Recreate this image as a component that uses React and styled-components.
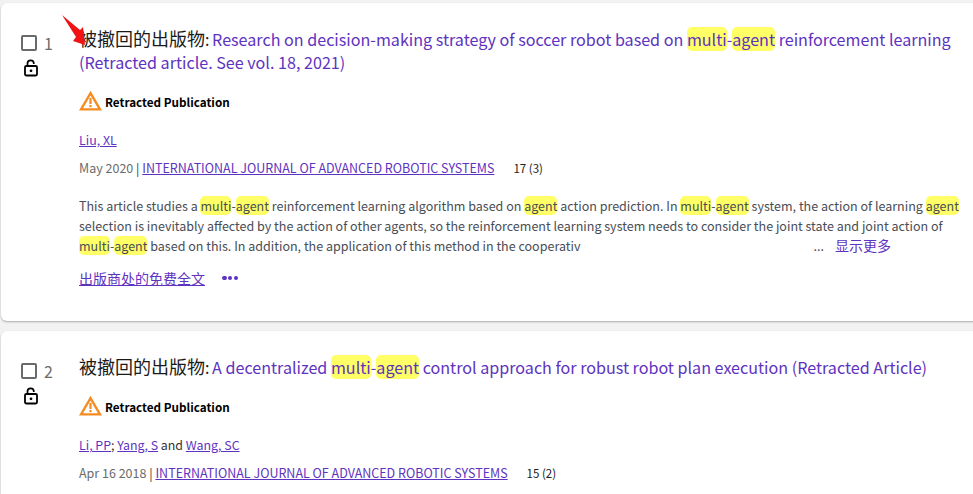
import React from 'react'
import styled, { createGlobalStyle } from 'styled-components'

const Global = createGlobalStyle`
  html, body {
    margin: 0;
    height: 100%;
    overflow: hidden;
    background: #f2f2f2;
    font-family: "Noto Sans CJK SC", "Noto Sans", sans-serif;
  }
`

const Page = styled.div`
  position: relative;
  width: 973px;
  height: 494px;
  overflow: hidden;
  padding: 3px 0 0 1px;
  box-sizing: border-box;
`

const Card = styled.article`
  display: flex;
  box-sizing: border-box;
  width: 990px;
  height: ${(props) => props.height}px;
  margin-bottom: 10px;
  padding-top: 24px;
  background: #fff;
  border-radius: 6px;
  box-shadow: 0 1px 2px rgba(0, 0, 0, 0.3);
`

const Side = styled.div`
  display: flex;
  flex-direction: column;
  width: 78px;
  padding: 6px 0 0 20px;
  box-sizing: border-box;
  flex-shrink: 0;
`

const CheckRow = styled.div`
  display: flex;
  align-items: center;
  height: 20px;
  gap: 7px;
`

const Box = styled.span`
  width: 12px;
  height: 12px;
  border: 2px solid #6a6a6a;
  border-radius: 2px;
`

const Num = styled.span`
  font-size: 16px;
  color: #6b6b6b;
`

const LockWrap = styled.div`
  margin: 5px 0 0 2px;
  height: 18px;
`

const Body = styled.div`
  width: 884px;
  flex-shrink: 0;
`

const Title = styled.h3`
  margin: 0;
  font-size: 16.12px;
  font-weight: 400;
  line-height: 23px;
  color: #5e33bf;
  white-space: nowrap;
`

const Prefix = styled.span`
  font-size: 18px;
  color: #1a1a1a;
`

const Colon = styled.span`
  color: #1a1a1a;
  letter-spacing: -0.5px;
`

const Mark = styled.mark`
  background: #ffff66;
  color: inherit;
  border-radius: 5px;
`

const Badge = styled.div`
  display: flex;
  align-items: center;
  gap: 3px;
  margin-top: 15px;
  height: 24px;
  font-size: 11.7px;
  font-weight: 700;
  color: #000;
`

const Authors = styled.div`
  margin-top: 18px;
  font-size: 12.4px;
  line-height: 18px;
  color: #333;
`

const Link = styled.a`
  color: #5e33bf;
  text-decoration: underline;
`

const Meta = styled.div`
  margin-top: 10px;
  font-size: 12.5px;
  line-height: 18px;
  color: #6b6b6b;
  white-space: pre;
`

const Pipe = styled.span`
  color: #333;
`

const Count = styled.span`
  margin-left: 19px;
  font-size: 11.5px;
  color: #222;
`

const Abstract = styled.div`
  margin-top: 19px;
  font-size: 12.53px;
  line-height: 20px;
  color: #494d55;
  white-space: nowrap;
`

const LastLine = styled.div`
  display: flex;
  white-space: pre;
`

const Ellipsis = styled.span`
  margin-left: 233px;
`

const More = styled.a`
  margin: -1px 0 0 11px;
  font-size: 14px;
  color: #5e33bf;
`

const Actions = styled.div`
  display: flex;
  align-items: center;
  margin-top: 11px;
  font-size: 14px;
  line-height: 22px;
`

const Dots = styled.span`
  display: flex;
  gap: 1.2px;
  margin-left: 17px;
`

const Dot = styled.i`
  width: 4.6px;
  height: 4.6px;
  border-radius: 50%;
  background: #5e33bf;
`

const Arrow = styled.svg`
  position: absolute;
  left: 55px;
  top: 10px;
`

const Lock = () => (
  <svg width="16" height="18" viewBox="0 0 16 18" fill="none">
    <path d="M4.5 7V4.6C4.5 2.7 5.9 1.3 7.7 1.3C9.6 1.3 10.8 2.7 10.8 4.6V5" stroke="#000" strokeWidth="1.7" />
    <rect x="2" y="7" width="12" height="9.5" rx="1.2" stroke="#000" strokeWidth="1.8" />
    <circle cx="8" cy="11.8" r="1.4" fill="#000" />
  </svg>
)

const Warning = () => (
  <svg width="23" height="20" viewBox="0 0 23 20" fill="none">
    <path d="M11.5 2.2L21 18.4H2Z" stroke="#f68b1f" strokeWidth="2.4" strokeLinejoin="miter" />
    <rect x="10.4" y="7" width="2.2" height="6" fill="#f68b1f" />
    <rect x="10.4" y="14" width="2.2" height="2.2" fill="#f68b1f" />
  </svg>
)

const Retracted = () => (
  <Badge>
    <Warning />
    Retracted Publication
  </Badge>
)

const RecordSide = ({ n }) => (
  <Side>
    <CheckRow>
      <Box />
      <Num>{n}</Num>
    </CheckRow>
    <LockWrap>
      <Lock />
    </LockWrap>
  </Side>
)

export default function App() {
  return (
    <Page>
      <Global />
      <Card height={318}>
        <RecordSide n={1} />
        <Body>
          <Title>
            <Prefix>被撤回的出版物</Prefix>
            <Colon>: </Colon>
            Research on decision-making strategy of soccer robot based on <Mark>multi</Mark>-<Mark>agent</Mark> reinforcement learning
            <br />
            (Retracted article. See vol. 18, 2021)
          </Title>
          <Retracted />
          <Authors>
            <Link>Liu, XL</Link>
          </Authors>
          <Meta>
            May 2020 <Pipe>|</Pipe> <Link>INTERNATIONAL JOURNAL OF ADVANCED ROBOTIC SYSTEMS</Link>
            <Count>17 (3)</Count>
          </Meta>
          <Abstract>
            This article studies a <Mark>multi</Mark>-<Mark>agent</Mark> reinforcement learning algorithm based on <Mark>agent</Mark> action prediction. In <Mark>multi</Mark>-<Mark>agent</Mark> system, the action of learning <Mark>agent</Mark>
            <br />
            selection is inevitably affected by the action of other agents, so the reinforcement learning system needs to consider the joint state and joint action of
            <LastLine>
              <span><Mark>multi</Mark>-<Mark>agent</Mark> based on this. In addition, the application of this method in the cooperativ</span>
              <Ellipsis>...</Ellipsis>
              <More>显示更多</More>
            </LastLine>
          </Abstract>
          <Actions>
            <Link>出版商处的免费全文</Link>
            <Dots>
              <Dot />
              <Dot />
              <Dot />
            </Dots>
          </Actions>
        </Body>
      </Card>
      <Card height={200}>
        <RecordSide n={2} />
        <Body>
          <Title>
            <Prefix>被撤回的出版物</Prefix>
            <Colon>: </Colon>
            A decentralized <Mark>multi</Mark>-<Mark>agent</Mark> control approach for robust robot plan execution (Retracted Article)
          </Title>
          <Retracted />
          <Authors>
            <Link>Li, PP</Link>; <Link>Yang, S</Link> and <Link>Wang, SC</Link>
          </Authors>
          <Meta>
            Apr 16 2018 <Pipe>|</Pipe> <Link>INTERNATIONAL JOURNAL OF ADVANCED ROBOTIC SYSTEMS</Link>
            <Count>15 (2)</Count>
          </Meta>
        </Body>
      </Card>
      <Arrow width="40" height="42" viewBox="0 0 40 42">
        <path d="M7 5L25 20L28 17L30 35L18 31L21 27Z" fill="#f01414" />
      </Arrow>
    </Page>
  )
}
